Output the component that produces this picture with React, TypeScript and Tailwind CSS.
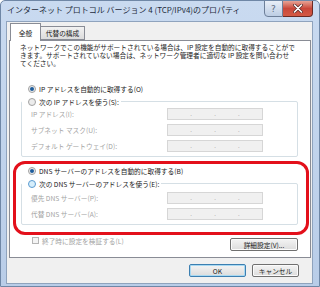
function Radio({ on, hot }: { on?: boolean; hot?: boolean }) {
  return (
    <span
      className={`w-[8px] h-[8px] rounded-full border flex items-center justify-center shrink-0 ${
        hot ? 'border-[#5b9bd0] bg-[#d6eefb]' : 'border-[#a2a2a2] bg-[#ececec]'
      }`}
    >
      {on && <span className="w-[4px] h-[4px] rounded-full bg-[#1e5d9c]" />}
    </span>
  );
}

function IpBox() {
  return (
    <div className="w-[96px] h-[12px] border border-[#d6d6d6] bg-[#f0f0f0] flex items-center text-[#9a9a9a] text-[6px] leading-none">
      <span className="flex-1" />
      <span>.</span>
      <span className="flex-1" />
      <span>.</span>
      <span className="flex-1" />
      <span>.</span>
      <span className="flex-1" />
    </div>
  );
}

function Field({ label }: { label: string }) {
  return (
    <div className="flex items-center justify-between pl-[9px] pr-[34px] h-[12px]">
      <span className="text-[#a3a3a3]">{label}</span>
      <IpBox />
    </div>
  );
}

function Btn({ children, primary, className }: { children: React.ReactNode; primary?: boolean; className?: string }) {
  return (
    <div
      className={`h-[13px] flex items-center justify-center rounded-[2px] border bg-gradient-to-b from-[#f4f4f4] to-[#dcdcdc] text-[#222] ${
        primary ? 'border-[#3c7fb1] shadow-[inset_0_0_0_1px_#a8d9f2]' : 'border-[#707070] shadow-[inset_0_0_0_1px_#fbfbfb]'
      } ${className ?? ''}`}
    >
      {children}
    </div>
  );
}

export default function App() {
  return (
    <div className="w-[320px] h-[287px] relative overflow-hidden bg-gradient-to-b from-[#c9daf0] to-[#b9cde8] border border-[#6f87a6] rounded-t-[5px] font-['Noto_Sans_CJK_JP','Noto_Sans',sans-serif] text-[6.7px] leading-[8px] text-[#1a1a1a]">
      {/* Title bar */}
      <div className="h-[20px] flex items-start">
        <div className="pl-[6px] pt-[4px] text-[8px] leading-[10px] text-[#1e2b3c] whitespace-nowrap">
          インターネット プロトコル バージョン 4 (TCP/IPv4)のプロパティ
        </div>
        <div className="ml-auto mr-[6px] flex -mt-px">
          <div className="w-[19px] h-[17px] rounded-bl-[4px] border border-[#6d7f99] bg-gradient-to-b from-[#e8eef7] to-[#bccde4] flex items-center justify-center text-[9px] text-[#5b6b80] font-['DejaVu_Sans',sans-serif]">
            ?
          </div>
          <div className="w-[30px] h-[17px] rounded-br-[4px] border border-l-0 border-[#6b2a24] bg-gradient-to-b from-[#e6a396] via-[#c9473a] to-[#d45a45] flex items-center justify-center">
            <svg width="10" height="9" viewBox="0 0 10 9">
              <path d="M1.5 1 L8.5 8 M8.5 1 L1.5 8" stroke="#5a2a26" strokeWidth="3" strokeLinecap="round" />
              <path d="M1.5 1 L8.5 8 M8.5 1 L1.5 8" stroke="#ffffff" strokeWidth="1.6" strokeLinecap="round" />
            </svg>
          </div>
        </div>
      </div>

      {/* Client area */}
      <div className="ml-[5px] mr-[6px] h-[263px] bg-[#f0f0f0] border border-[#8fa3bd] flex flex-col">
        {/* Tabs */}
        <div className="flex items-end pl-[3px] pt-[1px] relative z-10 -mb-px">
          <div className="w-[31px] h-[18px] bg-white border border-b-0 border-[#898c95] flex items-center justify-center">
            全般
          </div>
          <div className="w-[44px] h-[14px] mb-px bg-gradient-to-b from-[#f2f2f2] to-[#dcdcdc] border border-l-0 border-[#898c95] flex items-center justify-center">
            代替の構成
          </div>
        </div>

        {/* Panel */}
        <div className="ml-[2px] mr-[1px] h-[218px] bg-white border border-[#898c95] flex flex-col">
          <p className="pl-[10px] pt-[2px] whitespace-nowrap">
            ネットワークでこの機能がサポートされている場合は、IP 設定を自動的に取得することがで
            <br />
            きます。サポートされていない場合は、ネットワーク管理者に適切な IP 設定を問い合わせ
            <br />
            てください。
          </p>

          <div className="flex items-center gap-[3px] pl-[18px] mt-[17px] h-[9px]">
            <Radio on />
            <span>IP アドレスを自動的に取得する(O)</span>
          </div>

          <div className="mt-[8px] ml-[11px] mr-[12px] border border-[#d5dfe5] rounded-[2px] pb-[4px] flex flex-col">
            <div className="-mt-[5px] h-[9px] flex items-center gap-[3px] pl-[6px] pr-[2px] self-start bg-white">
              <Radio />
              <span>次の IP アドレスを使う(S):</span>
            </div>
            <div className="mt-[2px] flex flex-col gap-[4px]">
              <Field label="IP アドレス(I):" />
              <Field label="サブネット マスク(U):" />
              <Field label="デフォルト ゲートウェイ(D):" />
            </div>
          </div>

          <div className="flex items-center gap-[3px] pl-[18px] mt-[9px] h-[9px]">
            <Radio on />
            <span>DNS サーバーのアドレスを自動的に取得する(B)</span>
          </div>

          <div className="mt-[8px] ml-[11px] mr-[12px] border border-[#d5dfe5] rounded-[2px] pb-[4px] flex flex-col">
            <div className="-mt-[5px] h-[9px] flex items-center gap-[3px] pl-[6px] pr-[2px] self-start bg-white">
              <Radio hot />
              <span>次の DNS サーバーのアドレスを使う(E):</span>
            </div>
            <div className="mt-[4px] flex flex-col gap-[4px]">
              <Field label="優先 DNS サーバー(P):" />
              <Field label="代替 DNS サーバー(A):" />
            </div>
          </div>

          <div className="mt-[11px] flex items-start pl-[22px] pr-[12px]">
            <div className="flex items-center gap-[3px] h-[9px]">
              <span className="w-[7px] h-[7px] border border-[#b5b5b5] bg-[#f4f4f4]" />
              <span className="text-[#a3a3a3]">終了時に設定を検証する(L)</span>
            </div>
            <Btn className="ml-auto mt-[2px] w-[68px]">詳細設定(V)...</Btn>
          </div>
        </div>

        {/* Dialog buttons */}
        <div className="mt-[6px] flex justify-end gap-[6px] pr-[13px]">
          <Btn primary className="w-[57px]">OK</Btn>
          <Btn className="w-[47px]">キャンセル</Btn>
        </div>
      </div>

      {/* Red annotation */}
      <div className="absolute left-[12px] top-[160px] w-[296px] h-[74px] border-[3px] border-[#e3101b] rounded-[12px] pointer-events-none" />
    </div>
  );
}
